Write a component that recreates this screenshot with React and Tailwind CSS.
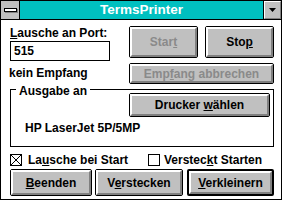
const font = "font-['Liberation_Sans',Arial,sans-serif]";

function Btn({ children, className = '', disabled = false, isDefault = false }) {
  return (
    <div
      className={`${isDefault ? 'border-2' : 'border'} rounded-[2px] border-black bg-[#c0c0c0] ${className}`}
    >
      <div className="flex h-full w-full items-center justify-center border-2 border-t-white border-l-white border-r-[#808080] border-b-[#808080]">
        <span
          className={`text-[12px] font-bold leading-[14px] ${disabled ? 'text-[#8a8a8a]' : 'text-black'}`}
        >
          {children}
        </span>
      </div>
    </div>
  );
}

function CheckBox({ checked }) {
  return (
    <svg width="12" height="12" viewBox="0 0 12 12" className="shrink-0">
      <rect x="0.5" y="0.5" width="11" height="11" fill="white" stroke="black" />
      {checked && (
        <path d="M1 1 L11 11 M11 1 L1 11" stroke="black" strokeWidth="1" shapeRendering="crispEdges" />
      )}
    </svg>
  );
}

export default function App() {
  return (
    <div className={`${font} flex h-[200px] w-[282px] flex-col border border-black bg-white text-black`}>
      {/* title bar */}
      <div className="flex h-[19px] shrink-0 border-b border-black bg-[#00c0c0]">
        <div className="flex w-[19px] items-center justify-center border-r border-black bg-[#c0c0c0]">
          <div className="h-[4px] w-[13px] border border-black bg-white shadow-[1px_1px_0_#808080]" />
        </div>
        <div className="flex-1 text-center text-[13.5px] font-bold leading-[18px] text-white">
          TermsPrinter
        </div>
        <div className="w-[18px] border-l border-black bg-[#c0c0c0]">
          <div className="flex h-full w-full items-center justify-center border border-t-white border-l-white border-r-[#808080] border-b-[#808080]">
            <svg width="7" height="4" viewBox="0 0 7 4">
              <polygon points="0,0 7,0 3.5,4" fill="black" />
            </svg>
          </div>
        </div>
      </div>

      {/* client area */}
      <div className="flex flex-1 flex-col pl-[9px] pr-[7px] text-[12px] font-bold leading-[14px]">
        <div className="flex items-start">
          <div className="mt-[6px] w-[100px]">
            <div className="h-[14px]">
              <u>L</u>ausche an Port:
            </div>
            <div className="mt-[1px] flex h-[20px] items-center border border-black pl-[3px]">515</div>
            <div className="-ml-[1px] mt-[5px]">kein Empfang</div>
          </div>
          <div className="ml-[19px] mt-[6px] w-[145px]">
            <div className="grid h-[32px] grid-cols-2 gap-[7px]">
              <Btn disabled>
                Star<u>t</u>
              </Btn>
              <Btn>
                Sto<u>p</u>
              </Btn>
            </div>
            <Btn disabled className="mt-[5px] h-[21px]">
              Emp<u>f</u>ang abbrechen
            </Btn>
          </div>
        </div>

        {/* group box */}
        <div className="relative mt-[5px] border border-black pb-[11px] pt-[3px]">
          <div className="absolute -top-[6px] left-[5px] bg-white px-[3px]">Ausgabe an</div>
          <div className="flex justify-end pr-[3px]">
            <Btn className="h-[24px] w-[141px]">
              Drucker <u>w</u>ählen
            </Btn>
          </div>
          <div className="mt-[4px] pl-[14px]">HP LaserJet 5P/5MP</div>
        </div>

        {/* checkboxes */}
        <div className="mt-[6px] flex h-[14px] items-center">
          <div className="flex w-[138px] items-center gap-[6px]">
            <CheckBox checked />
            <span>
              La<u>u</u>sche bei Start
            </span>
          </div>
          <div className="flex items-center gap-[4px]">
            <CheckBox />
            <span>
              Verstec<u>k</u>t Starten
            </span>
          </div>
        </div>

        {/* bottom buttons */}
        <div className="mt-[2px] flex h-[27px]">
          <Btn className="w-[82px]">
            <u>B</u>eenden
          </Btn>
          <Btn className="ml-[3px] w-[88px]">
            V<u>e</u>rstecken
          </Btn>
          <Btn isDefault className="ml-[4px] w-[87px]">
            <u>V</u>erkleinern
          </Btn>
        </div>
      </div>
    </div>
  );
}
